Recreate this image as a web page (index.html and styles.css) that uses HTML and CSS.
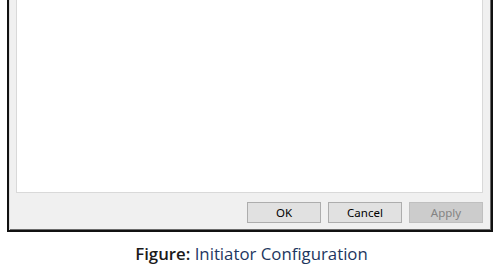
FILE: index.html
```html
<!DOCTYPE html>
<html lang="en">
<head>
    <meta charset="UTF-8">
    <meta name="viewport" content="width=device-width, initial-scale=1.0">
    <title>Initiator Configuration</title>
    <link rel="stylesheet" href="styles.css">
</head>

<body>
    <div class="dialog">
        <div class="panel"></div>

        <div class="actions">
            <button type="button" class="btn">OK</button>
            <button type="button" class="btn">Cancel</button>
            <button type="button" class="btn" disabled>Apply</button>
        </div>
    </div>

    <p class="caption"><strong>Figure:</strong> Initiator Configuration</p>
</body>
</html>
```

FILE: styles.css
```css
body {
    margin: 0;
    background: #fff;
    font-family: "Open Sans", "Noto Sans", sans-serif;
}

.dialog {
    box-sizing: border-box;
    width: 486px;
    margin-left: 7px;
    padding: 0 8px 7px 7px;
    background: #f0f0f0;
    border: 2px solid #111;
    border-top: none;
    box-shadow: inset 1px 0 #dcdcdc, inset -1px 0 #6b6b6b, inset 0 -1px #6b6b6b;
}

.panel {
    height: 193px;
    box-sizing: border-box;
    background: #fff;
    border: 1px solid #d9d9d9;
    border-top: none;
}

.actions {
    display: flex;
    justify-content: flex-end;
    gap: 7px;
    margin-top: 9px;
}

.btn {
    width: 74px;
    height: 21px;
    padding: 0;
    font-family: "Noto Sans", sans-serif;
    font-size: 11.5px;
    color: #000;
    background: #e1e1e1;
    border: 1px solid #adadad;
}

.btn:disabled {
    color: #838383;
    background: #cccccc;
    border-color: #bfbfbf;
}

.caption {
    margin: 10px 0 0;
    text-align: center;
    font-size: 16.8px;
    line-height: 24px;
    color: #1d3660;
}

.caption strong {
    color: #1a1a1a;
    font-weight: 600;
}
```
